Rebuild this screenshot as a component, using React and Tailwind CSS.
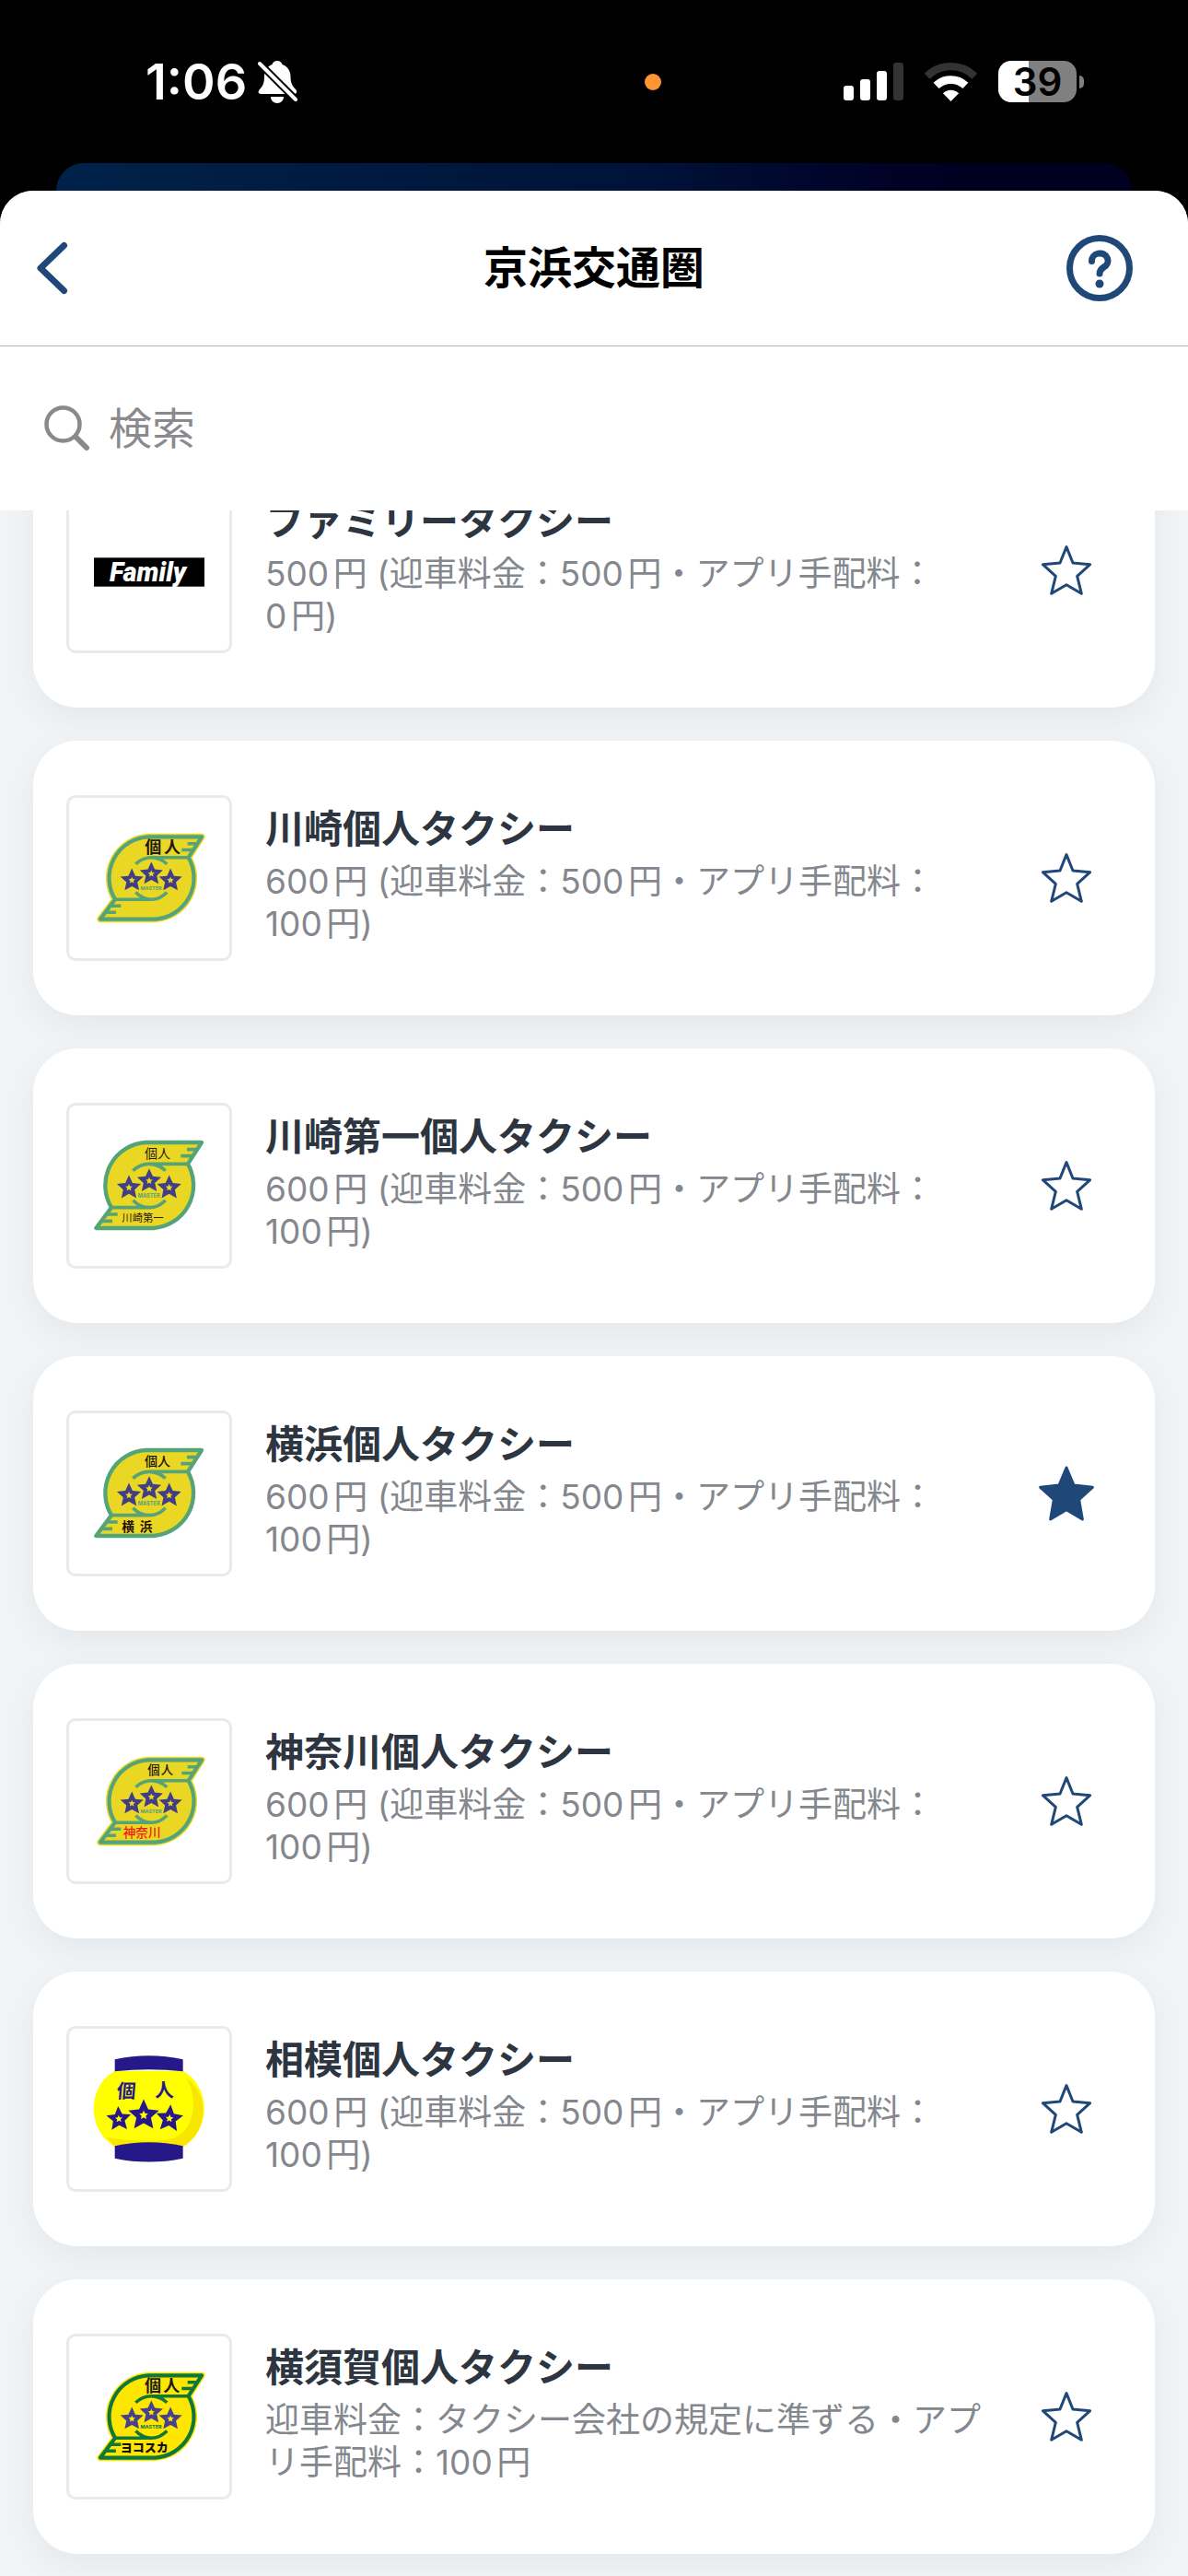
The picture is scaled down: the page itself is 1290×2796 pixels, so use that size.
import { useState } from "react";

const companies = [
    { id: 1, name: "ファミリータクシー", fee: "500円 (迎車料金：500円・アプリ手配料：\n0円)", logo: "family" },
    { id: 2, name: "川崎個人タクシー", fee: "600円 (迎車料金：500円・アプリ手配料：\n100円)", logo: "kawasaki" },
    { id: 3, name: "川崎第一個人タクシー", fee: "600円 (迎車料金：500円・アプリ手配料：\n100円)", logo: "kawasaki1" },
    { id: 4, name: "横浜個人タクシー", fee: "600円 (迎車料金：500円・アプリ手配料：\n100円)", logo: "yokohama" },
    { id: 5, name: "神奈川個人タクシー", fee: "600円 (迎車料金：500円・アプリ手配料：\n100円)", logo: "kanagawa" },
    { id: 6, name: "相模個人タクシー", fee: "600円 (迎車料金：500円・アプリ手配料：\n100円)", logo: "sagami" },
    { id: 7, name: "横須賀個人タクシー", fee: "迎車料金：タクシー会社の規定に準ずる・アプ\nリ手配料：100円", logo: "yokosuka" },
];

function BadgeStar({ x, y, size, fill, hole, rotate = 0 }) {
    const star = "M0 -41L12 -15L40 -12L19 7L25 35L0 21L-25 35L-19 7L-40 -12L-12 -15Z";
    return (
        <g transform={`translate(${x} ${y}) rotate(${rotate}) scale(${size})`}>
            <path d={star} fill={fill} />
            <path d={star} fill={hole} transform="scale(0.29)" />
        </g>
    );
}

const leaf = "M447 138H265A140 140 0 0 0 153 350L103 417H290A140 140 0 0 0 402 208Z";

function LeafLogo({ edge, green = "#55a479", yellow = "#ead723", star = "#403e85", children }) {
    return (
        <svg viewBox="15 18 522 522" className="h-full w-full" aria-hidden="true">
            <g transform={edge ? "translate(18 12.5) scale(0.96)" : undefined}>
                {edge && <path d={leaf} fill={yellow} stroke={yellow} strokeWidth="22" strokeLinejoin="round" />}
                <path d={leaf} fill={yellow} stroke={green} strokeWidth="13" strokeLinejoin="round" />
                <g fill="none" stroke={green} strokeWidth="11">
                    <path d="M402 208H275Q246 208 223 230M275 208Q306 208 329 230" />
                    <path d="M153 350H277Q306 350 329 326M277 350Q246 350 223 326" />
                    <path d="M432 161H399M417 182H379M136 372H173M121 394H156" />
                </g>
                <BadgeStar x={210} y={285} size={0.98} fill={star} hole={yellow} />
                <BadgeStar x={276} y={263} size={0.98} fill={star} hole={yellow} />
                <BadgeStar x={341} y={285} size={0.98} fill={star} hole={yellow} />
                <text x="275" y="318" textAnchor="middle" fontSize="17" fontWeight="700" fill={green}>MASTER</text>
            </g>
            {children}
        </svg>
    );
}

function FamilyLogo() {
    return (
        <svg viewBox="15 18 522 522" className="h-full w-full" aria-hidden="true">
            <rect x="96" y="238" width="360" height="94" fill="#000" />
            <text x="272" y="314" textAnchor="middle" fontSize="86" className="font-[Roboto] font-black italic" fill="#fff">Family</text>
        </svg>
    );
}

function LanternLogo() {
    return (
        <svg viewBox="15 18 522 522" className="h-full w-full" aria-hidden="true">
            <path d="M164 155C72 205 72 350 164 402H386C478 350 478 205 386 155Z" fill="#ff0" />
            <path d="M396 178C440 245 425 372 330 380Q230 388 138 372L164 402H386C474 350 470 225 396 178Z" fill="#f9e600" />
            <path d="M164 118Q275 93 386 118V157Q275 145 164 157Z" fill="#27188a" />
            <path d="M164 400Q275 375 386 400V440Q275 463 164 440Z" fill="#27188a" />
            <g fill="#27188a" fontSize="62" fontWeight="700">
                <text transform="translate(169 242) skewX(-5)">個</text>
                <text transform="translate(295 239) skewX(3)">人</text>
            </g>
            <BadgeStar x={177} y={311} size={1} fill="#27188a" hole="#ff0" rotate={-3} />
            <BadgeStar x={258} y={299} size={1.25} fill="#27188a" hole="#ff0" />
            <BadgeStar x={342} y={310} size={1.1} fill="#27188a" hole="#ff0" rotate={5} />
        </svg>
    );
}

function Logo({ kind }) {
    if (kind === "family") return <FamilyLogo />;
    if (kind === "sagami") return <LanternLogo />;
    if (kind === "kawasaki") {
        return (
            <LeafLogo edge>
                <text x="262 324" y="198" fontSize="54" fontWeight="700" fill="#1d1a18">個人</text>
            </LeafLogo>
        );
    }
    if (kind === "kawasaki1") {
        return (
            <LeafLogo>
                <text x="261" y="189" fontSize="42" fill="#2b1d14">個人</text>
                <text x="187" y="397" fontSize="34" fill="#2b1d14">川崎第一</text>
            </LeafLogo>
        );
    }
    if (kind === "yokohama") {
        return (
            <LeafLogo>
                <text x="261" y="189" fontSize="42" fontWeight="500" fill="#1d1108">個人</text>
                <text x="187 245" y="401" fontSize="41" fontWeight="700" fill="#1d1108">横浜</text>
            </LeafLogo>
        );
    }
    if (kind === "kanagawa") {
        return (
            <LeafLogo edge>
                <text x="271 314" y="191" fontSize="40" fontWeight="500" fill="#1d1a18">個人</text>
                <text x="191" y="395" fontSize="41" fontWeight="500" fill="#f01818">神奈川</text>
            </LeafLogo>
        );
    }
    return (
        <LeafLogo edge green="#10773a" yellow="#ffe600" star="#45418c">
            <text x="261 322" y="198" fontSize="54" fontWeight="700" fill="#1d1a18">個人</text>
            <text x="182" y="394" fontSize="39" fontWeight="900" fill="#111">ヨコスカ</text>
        </LeafLogo>
    );
}

function StatusBar() {
    return (
        <div className="flex h-[177px] shrink-0 items-center text-white">
            <div className="flex w-[700px] items-center gap-3 pl-[158px]">
                <span className="text-[54px] leading-none font-semibold">1:06</span>
                <svg viewBox="0 0 44 48" className="h-12 w-11" aria-hidden="true">
                    <path d="M21 1c-3 0-5 1.800-5.500 4C9.500 7.500 7 12.500 7 18c0 8-2 10.500-5 14-2.500 3-1.500 5 1.500 5h36c3 0 3.500-2.500 1.500-5-3-3.500-5.500-6-5.500-14 0-5.500-2.500-10.500-9-13C26 2.800 24 1 21 1Z" fill="#fff" />
                    <path d="M14 40h14c0 4-3 7-7 7s-7-3-7-7Z" fill="#fff" />
                    <path d="M0 2L42 44" stroke="#000" strokeWidth="8" />
                    <path d="M2 4L41 43" stroke="#fff" strokeWidth="4" strokeLinecap="round" />
                </svg>
            </div>
            <span className="size-[18px] rounded-full bg-[#ff9533]" />
            <div className="ml-auto flex items-center gap-[23px] pr-[113px]">
                <svg viewBox="0 0 65 42" className="h-[42px] w-[65px]" aria-hidden="true">
                    <rect x="0" y="25" width="11" height="16" rx="3" fill="#fff" />
                    <rect x="18" y="18" width="11" height="23" rx="3" fill="#fff" />
                    <rect x="36" y="9" width="11" height="32" rx="3" fill="#fff" />
                    <rect x="54" y="0" width="11" height="41" rx="3" fill="#333" />
                </svg>
                <svg viewBox="0 0 172 126" className="h-[42px] w-[57px]" aria-hidden="true">
                    <path d="M8 44A112 112 0 0 1 164 44" fill="none" stroke="#333" strokeWidth="25" />
                    <path d="M38 75A70 70 0 0 1 134 75" fill="none" stroke="#fff" strokeWidth="26" />
                    <path d="M60 100A37 37 0 0 1 112 100L86 126Z" fill="#fff" />
                </svg>
                <div className="flex items-center gap-[3px]">
                    <div className="flex h-[45px] w-[85px] items-center justify-center rounded-[14px] bg-linear-to-r from-white from-39% to-[#808080] to-39% text-[42px] leading-none font-semibold text-black">
                        39
                    </div>
                    <span className="h-[14px] w-[5px] rounded-r-full bg-[#808080]" />
                </div>
            </div>
        </div>
    );
}

function CompanyCard({ company, favorite, onToggle }) {
    return (
        <li className="flex items-center gap-9 rounded-[48px] bg-white px-9 py-[59px] shadow-[0_12px_36px_rgba(0,0,0,0.05)]">
            <div className="size-[180px] shrink-0 rounded-[10px] border-3 border-[#e9eaeb]">
                <Logo kind={company.logo} />
            </div>
            <div className="min-w-0 flex-1">
                <h2 className="mb-[14px] text-[42px] leading-10 font-bold text-[#2c3540]">{company.name}</h2>
                <p className="text-[37px] leading-[46px] whitespace-pre-line text-[#84888e] [text-autospace:normal]">{company.fee}</p>
            </div>
            <button
                type="button"
                aria-label={`${company.name}をお気に入りに登録`}
                aria-pressed={favorite}
                onClick={onToggle}
                className="mr-[30px] shrink-0"
            >
                <svg viewBox="-90 -90 180 180" className="size-[60px] text-[#1f4879]" stroke="currentColor" strokeWidth="9" strokeLinejoin="round" aria-hidden="true">
                    {favorite ? (
                        <path fill="currentColor" d="M0 -84L24 -27L85 -20L41 20L52 84L0 53L-52 84L-41 20L-85 -20L-24 -27Z" />
                    ) : (
                        <path fill="none" d="M0 -76L21 -24L77 -19L35 19L49 76L0 47L-49 76L-35 19L-77 -19L-21 -24Z" />
                    )}
                </svg>
            </button>
        </li>
    );
}

export default function App() {
    const [favorites, setFavorites] = useState([4]);
    const [query, setQuery] = useState("");

    const toggle = (id) =>
        setFavorites((prev) => (prev.includes(id) ? prev.filter((f) => f !== id) : [...prev, id]));

    return (
        <div lang="ja" className="flex h-screen flex-col overflow-hidden bg-black font-[Inter,'Noto_Sans_CJK_JP',sans-serif]">
            <StatusBar />
            <div className="mx-[61px] h-[30px] shrink-0 rounded-t-[30px] bg-linear-to-r from-[#00224a] via-[#001238] via-55% to-[#000020] to-85%" />
            <main className="flex min-h-0 flex-1 flex-col overflow-hidden rounded-t-[36px] bg-[#f0f4f7]">
                <header className="flex shrink-0 items-center justify-between border-b border-[#b2b2b2] bg-white pr-[60px] pl-9 py-12">
                    <button type="button" aria-label="戻る" className="flex w-24 text-[#1f4879]">
                        <svg viewBox="0 0 40 60" className="h-[60px] w-10" fill="none" stroke="currentColor" strokeWidth="7" strokeLinecap="round" strokeLinejoin="round" aria-hidden="true">
                            <path d="M33.500 5.500L8 30L33.500 54.500" />
                        </svg>
                    </button>
                    <h1 className="text-[48px] leading-[70px] font-bold text-black">京浜交通圏</h1>
                    <button type="button" aria-label="ヘルプ" className="text-[#1f4879]">
                        <svg viewBox="0 0 72 72" className="size-[72px]" fill="none" stroke="currentColor" aria-hidden="true">
                            <circle cx="36" cy="36" r="32.500" strokeWidth="7" />
                            <path d="M27.500 28.500a8.800 8 0 1 1 13 6.500c-3.500 2.300-4.500 3.800-4.500 7" strokeWidth="7" strokeLinecap="round" />
                            <circle cx="36" cy="53" r="4.500" fill="currentColor" stroke="none" />
                        </svg>
                    </button>
                </header>
                <label className="flex shrink-0 items-center gap-5 bg-white px-12 py-[54px]">
                    <svg viewBox="0 0 50 50" className="size-[50px] text-[#8a8a8e]" fill="none" stroke="currentColor" aria-hidden="true">
                        <circle cx="20.500" cy="20.500" r="18" strokeWidth="4.500" />
                        <path d="M34 34L46 46" strokeWidth="6" strokeLinecap="round" />
                    </svg>
                    <input
                        type="text"
                        aria-label="検索"
                        placeholder="検索"
                        value={query}
                        onChange={(e) => setQuery(e.target.value)}
                        className="min-w-0 flex-1 text-[47px] leading-[70px] outline-none placeholder:text-[#8a8a8e]"
                    />
                </label>
                <div className="min-h-0 flex-1 overflow-hidden px-9">
                    <ul className="-mt-[84px] flex flex-col gap-9">
                        {companies
                            .filter((c) => c.name.includes(query))
                            .map((c) => (
                                <CompanyCard key={c.id} company={c} favorite={favorites.includes(c.id)} onToggle={() => toggle(c.id)} />
                            ))}
                    </ul>
                </div>
            </main>
        </div>
    );
}
